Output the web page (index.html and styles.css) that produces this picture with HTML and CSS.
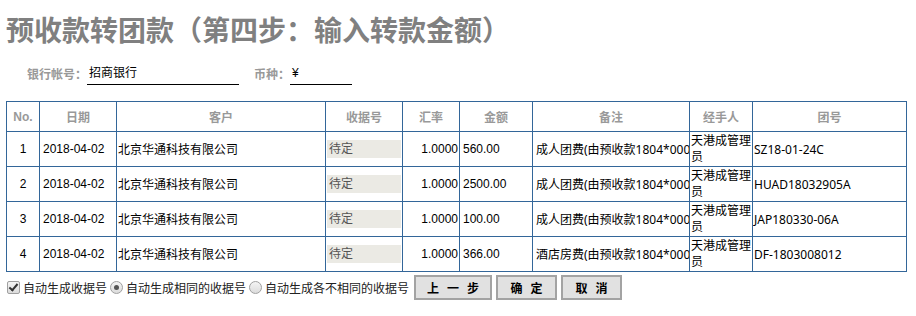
FILE: index.html
```html
<!DOCTYPE html>
<html lang="zh-CN">
<head>
  <meta charset="UTF-8" />
  <title>预收款转团款</title>
  <link rel="stylesheet" href="styles.css">
</head>
<body>
  <h1 class="page-title">预收款转团款（第四步：输入转款金额）</h1>
  <div class="bank-row">
    <span class="field-label">银行帐号：</span>
    <span class="field-value bank-value">招商银行</span>
    <span class="field-label currency-label">币种：</span>
    <span class="field-value currency-value">¥</span>
  </div>
  <table class="transfer-table">
    <colgroup>
      <col style="width:33px">
      <col style="width:77px">
      <col style="width:209px">
      <col style="width:77px">
      <col style="width:57px">
      <col style="width:73px">
      <col style="width:157px">
      <col style="width:63px">
      <col style="width:154px">
    </colgroup>
    <thead>
      <tr>
        <th>No.</th>
        <th>日期</th>
        <th>客户</th>
        <th>收据号</th>
        <th>汇率</th>
        <th>金额</th>
        <th>备注</th>
        <th>经手人</th>
        <th>团号</th>
      </tr>
    </thead>
    <tbody id="rows"></tbody>
  </table>
  <div class="action-row">
    <label class="opt"><input type="checkbox" class="chk" checked> 自动生成收据号</label>
    <label class="opt"><input type="radio" class="rad" name="mode" checked> 自动生成相同的收据号</label>
    <label class="opt"><input type="radio" class="rad" name="mode"> 自动生成各不相同的收据号</label>
    <button class="btn btn-prev">上一步</button>
    <button class="btn">确定</button>
    <button class="btn">取消</button>
  </div>
  <script>
    const data = [
      ['1', '2018-04-02', '北京华通科技有限公司', '1.0000', '560.00', '成人团费(由预收款1804*0001转入)', '天港成管理员', 'SZ18-01-24C'],
      ['2', '2018-04-02', '北京华通科技有限公司', '1.0000', '2500.00', '成人团费(由预收款1804*0001转入)', '天港成管理员', 'HUAD18032905A'],
      ['3', '2018-04-02', '北京华通科技有限公司', '1.0000', '100.00', '成人团费(由预收款1804*0001转入)', '天港成管理员', 'JAP180330-06A'],
      ['4', '2018-04-02', '北京华通科技有限公司', '1.0000', '366.00', '酒店房费(由预收款1804*0001转入)', '天港成管理员', 'DF-1803008012']
    ];
    const tbody = document.getElementById('rows');
    data.forEach(r => {
      const tr = document.createElement('tr');
      tr.innerHTML =
        `<td class="c-no">${r[0]}</td>` +
        `<td>${r[1]}</td>` +
        `<td class="c-cust">${r[2]}</td>` +
        `<td class="c-receipt"><span class="receipt-box">待定</span></td>` +
        `<td class="c-rate">${r[3]}</td>` +
        `<td>${r[4]}</td>` +
        `<td class="c-note"><span class="note-text">${r[5]}</span></td>` +
        `<td class="c-man">${r[6]}</td>` +
        `<td class="c-group">${r[7]}</td>`;
      tbody.appendChild(tr);
    });
  </script>
</body>
</html>
```

FILE: styles.css
```css
body {
  margin: 0;
  padding: 0 6px;
  font-family: "Liberation Sans", "Noto Sans CJK SC", sans-serif;
  font-size: 12px;
  color: #000;
  background: #fff;
}
.page-title {
  margin: 0;
  padding-top: 10px;
  font-family: "Noto Sans CJK TC", "Noto Sans CJK SC", sans-serif;
  font-size: 28px;
  line-height: 38px;
  font-weight: bold;
  color: #808080;
}
.bank-row {
  display: flex;
  align-items: flex-end;
  height: 24px;
  margin-top: 13px;
  padding-left: 21px;
}
.field-label {
  font-family: "Noto Sans CJK TC", "Noto Sans CJK SC", sans-serif;
  color: #999;
  font-weight: bold;
  line-height: 20px;
  padding-bottom: 1px;
}
.field-value {
  border-bottom: 1px solid #000;
  line-height: 20px;
  padding-bottom: 1px;
  padding-left: 2px;
  box-sizing: border-box;
}
.bank-value {
  width: 152px;
}
.currency-label {
  margin-left: 15px;
}
.currency-value {
  width: 62px;
}
.transfer-table {
  margin-top: 16px;
  width: 900px;
  table-layout: fixed;
  border-collapse: collapse;
}
.transfer-table th,
.transfer-table td {
  border: 1px solid #336699;
  padding: 0 3px;
  overflow: hidden;
}
.transfer-table th {
  height: 29px;
  color: #999;
  font-weight: bold;
  text-align: center;
}
.transfer-table td {
  height: 34px;
  text-align: left;
}
.transfer-table td.c-no {
  text-align: center;
}
.transfer-table td.c-cust,
.transfer-table td.c-man,
.transfer-table td.c-group {
  padding-left: 1px;
  font-family: "Noto Sans", "Noto Sans CJK SC", sans-serif;
}
.transfer-table td.c-man {
  line-height: 16px;
  padding-right: 0;
  padding-left: 1px;
  word-break: break-all;
}
.transfer-table td.c-receipt {
  padding: 0 1px;
}
.receipt-box {
  display: block;
  height: 18px;
  line-height: 18px;
  background: #ebeae4;
  color: #555;
  padding-left: 2px;
}
.transfer-table td.c-rate {
  text-align: right;
  padding-right: 1px;
}
.transfer-table td.c-note {
  padding-left: 3px;
  padding-right: 0;
}
.note-text {
  display: block;
  white-space: nowrap;
  overflow: hidden;
  font-family: "Noto Sans", "Noto Sans CJK SC", sans-serif;
}
.action-row {
  display: flex;
  align-items: center;
  margin-top: 3px;
  color: #222;
}
.opt {
  display: flex;
  align-items: center;
  margin-right: 3px;
}
.opt input {
  appearance: none;
  margin: 0 3px 0 1px;
  width: 13px;
  height: 13px;
  border: 1px solid #a0a0a0;
  background: linear-gradient(#f4f4f4, #dcdcdc);
  box-sizing: border-box;
  position: relative;
}
.opt + .opt input {
  margin-left: 0;
}
.opt .chk {
  border-radius: 2px;
}
.opt .chk:checked::after {
  content: "";
  position: absolute;
  left: 3px;
  top: 0;
  width: 3px;
  height: 7px;
  border: solid #333;
  border-width: 0 2px 2px 0;
  transform: rotate(40deg);
}
.opt .rad {
  border-radius: 50%;
}
.opt .rad:checked::after {
  content: "";
  position: absolute;
  left: 3px;
  top: 3px;
  width: 5px;
  height: 5px;
  border-radius: 50%;
  background: #555;
}
.btn {
  height: 25px;
  width: 61px;
  margin-left: 4px;
  background: #e1e1e1;
  border: 2px solid #a3a3a3;
  font-family: "Noto Sans CJK SC", sans-serif;
  font-size: 12px;
  font-weight: bold;
  letter-spacing: 8px;
  text-indent: 8px;
  color: #000;
  padding: 0;
}
.btn-prev {
  width: 78px;
  margin-left: 2px;
}
```
